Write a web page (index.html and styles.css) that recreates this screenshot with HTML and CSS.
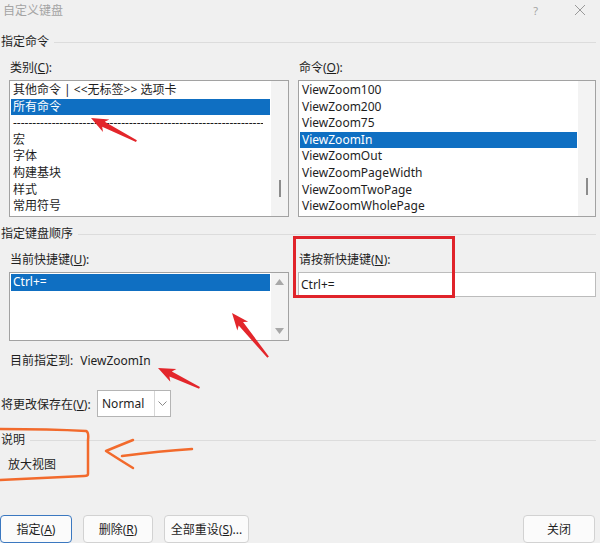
FILE: index.html
```html
<!DOCTYPE html>
<html lang="zh-CN">
<head>
    <meta charset="UTF-8">
    <meta name="viewport" content="width=device-width, initial-scale=1.0">
    <title>自定义键盘</title>
    <link rel="stylesheet" href="styles.css">
</head>
<body>
    <div class="titlebar">
        <span class="title">自定义键盘</span>
        <span class="help">?</span>
        <svg class="close" width="10" height="10" viewBox="0 0 10 10"><path d="M0 0L10 10M10 0L0 10" stroke="#9a9a9a" stroke-width="1"/></svg>
    </div>

    <!-- 指定命令 -->
    <div class="group-head gh-cmd"><span>指定命令</span><i></i></div>
    <div class="cols">
        <div class="col">
            <div class="label">类别(<u>C</u>):</div>
            <div class="listbox tall">
                <ul class="items">
                    <li>其他命令 | &lt;&lt;无标签&gt;&gt; 选项卡</li>
                    <li class="sel">所有命令</li>
                    <li class="dash">-----------------------------------------------------------------</li>
                    <li>宏</li>
                    <li>字体</li>
                    <li>构建基块</li>
                    <li>样式</li>
                    <li>常用符号</li>
                </ul>
                <div class="vscroll"><span class="thumb"></span></div>
            </div>
        </div>
        <div class="col">
            <div class="label">命令(<u>O</u>):</div>
            <div class="listbox tall">
                <ul class="items">
                    <li>ViewZoom100</li>
                    <li>ViewZoom200</li>
                    <li>ViewZoom75</li>
                    <li class="sel">ViewZoomIn</li>
                    <li>ViewZoomOut</li>
                    <li>ViewZoomPageWidth</li>
                    <li>ViewZoomTwoPage</li>
                    <li>ViewZoomWholePage</li>
                </ul>
                <div class="vscroll"><span class="thumb right"></span></div>
            </div>
        </div>
    </div>

    <!-- 指定键盘顺序 -->
    <div class="group-head gh-keys"><span>指定键盘顺序</span><i></i></div>
    <div class="cols">
        <div class="col">
            <div class="label">当前快捷键(<u>U</u>):</div>
            <div class="listbox short">
                <ul class="items">
                    <li class="sel">Ctrl+=</li>
                </ul>
                <div class="vscroll arrows">
                    <svg width="9" height="6" viewBox="0 0 9 6"><path d="M0 6L4.5 0L9 6Z" fill="#a8a8a8"/></svg>
                    <svg width="9" height="6" viewBox="0 0 9 6"><path d="M0 0L4.5 6L9 0Z" fill="#a8a8a8"/></svg>
                </div>
            </div>
        </div>
        <div class="col">
            <div class="label">请按新快捷键(<u>N</u>):</div>
            <div class="textbox">Ctrl+=</div>
        </div>
    </div>

    <div class="assigned"><span>目前指定到:</span><span class="target">ViewZoomIn</span></div>

    <div class="save-row">
        <span class="save-label">将更改保存在(<u>V</u>):</span>
        <div class="dropdown">
            <span class="value">Normal</span>
            <span class="drop-btn"><svg width="9" height="5" viewBox="0 0 9 5"><path d="M0.5 0.5L4.5 4.5L8.5 0.5" fill="none" stroke="#8a8a8a" stroke-width="1"/></svg></span>
        </div>
    </div>

    <!-- 说明 -->
    <div class="group-head gh-desc"><span>说明</span><i></i></div>
    <div class="desc">放大视图</div>

    <div class="buttons">
        <button class="btn default w72">指定(<u>A</u>)</button>
        <button class="btn w70">删除(<u>R</u>)</button>
        <button class="btn w85">全部重设(<u>S</u>)...</button>
        <button class="btn w72 close-btn">关闭</button>
    </div>

    <!-- annotations drawn over the dialog -->
    <svg class="marks" width="600" height="543" viewBox="0 0 600 543">
        <rect x="294.5" y="237.5" width="159" height="59" fill="none" stroke="#e0232a" stroke-width="3"/>
        <g fill="#e3262b">
            <polygon transform="translate(91 118) rotate(27)" points="0,0 17,-7 14,-2.8 51,-1 51,1 14,2.8 17,7"/>
            <polygon transform="translate(232 313) rotate(50.7)" points="0,0 17,-7 14,-2.8 57,-1 57,1 14,2.8 17,7"/>
            <polygon transform="translate(158 368) rotate(25.5)" points="0,0 17,-7 14,-2.8 46,-1 46,1 14,2.8 17,7"/>
        </g>
        <g fill="none" stroke="#f26a2c" stroke-width="2.5" stroke-linecap="round" stroke-linejoin="round">
            <path d="M0 429 Q50 429 86 431 Q89 432 88 440 L88 474 Q88 476 84 476 Q40 478 0 480"/>
            <path d="M192 449 Q160 451 122 456"/>
            <path d="M133 440 Q118 446 106 451 Q120 460 133 468"/>
        </g>
    </svg>
</body>
</html>
```

FILE: styles.css
```css
* {
    box-sizing: border-box;
}
body {
    margin: 0;
    width: 600px;
    height: 543px;
    overflow: hidden;
    position: relative;
    background: #f0f0f0;
    font-family: "Noto Sans", "Noto Sans CJK SC", sans-serif;
    font-size: 12px;
    color: #1e1e1e;
}
u {
    text-decoration: underline;
    text-underline-offset: 1px;
}

.titlebar {
    display: flex;
    align-items: center;
    height: 22px;
    padding: 0 15px 2px 3px;
    color: #a4a4a4;
}
.titlebar .title {
    flex: 1;
}
.help {
    font-size: 11px;
    margin-right: 37px;
}

.group-head {
    display: flex;
    align-items: center;
    height: 18px;
    line-height: 18px;
    padding: 0 4px 0 1px;
}
.group-head i {
    flex: 1;
    border-top: 1px solid #dcdcdc;
    margin-left: 5px;
}
.gh-cmd { margin-top: 11px; }
.gh-keys { margin-top: 8px; }
.gh-desc { margin-top: 14px; }

.cols {
    display: grid;
    grid-template-columns: 280px 298px;
    column-gap: 9px;
    padding-left: 9px;
}
.label {
    height: 18px;
    line-height: 18px;
    margin: 8px 0 3px 1px;
}

.listbox {
    display: flex;
    background: #fff;
    border: 1px solid #a2a2a2;
}
.listbox.tall { height: 137px; }
.listbox.short { height: 69px; }
.items {
    flex: 1;
    list-style: none;
    margin: 0;
    padding: 1px 1px 0 1px;
    overflow: hidden;
}
.items li {
    height: 16.6px;
    line-height: 16.6px;
    padding-left: 2px;
    white-space: nowrap;
}
.items li.sel {
    background: #0f6fc2;
    color: #fff;
}
.items li.dash {
    overflow: hidden;
    width: 252px;
}
.vscroll {
    width: 17px;
    background: #f3f3f3;
    display: flex;
    flex-direction: column;
    align-items: center;
}
.thumb {
    width: 2px;
    height: 17px;
    margin-top: 99px;
    background: #8c8c8c;
}
.thumb.right {
    margin-top: 97px;
}
.vscroll.arrows {
    justify-content: space-between;
    padding: 6px 0;
}

.textbox {
    height: 25px;
    line-height: 23px;
    padding-left: 2px;
    background: #fff;
    border: 1px solid #bcbcbc;
}

.assigned {
    display: flex;
    height: 18px;
    line-height: 18px;
    margin-top: 11px;
    padding-left: 10px;
}
.assigned .target {
    margin-left: 7px;
}

.save-row {
    display: flex;
    align-items: center;
    margin-top: 20px;
    padding-left: 1px;
}
.save-label {
    flex: 0 0 96px;
}
.dropdown {
    display: flex;
    width: 74px;
    height: 27px;
    background: #fff;
    border: 1px solid #b4b4b4;
}
.dropdown .value {
    flex: 1;
    line-height: 25px;
    padding-left: 4px;
}
.drop-btn {
    width: 16px;
    display: flex;
    align-items: center;
    justify-content: center;
    border-left: 1px solid #d6d6d6;
}

.desc {
    height: 18px;
    line-height: 18px;
    margin-top: 7px;
    padding-left: 8px;
}

.buttons {
    display: flex;
    gap: 11px;
    margin-top: 41px;
    padding-right: 5px;
}
.btn {
    height: 28px;
    padding: 0;
    font-family: inherit;
    font-size: 12px;
    color: #1e1e1e;
    background: #fbfbfb;
    border: 1px solid #d2d2d2;
    border-radius: 4px;
}
.btn.default {
    border-color: #3b78c0;
}
.w72 { width: 72px; }
.w70 { width: 70px; }
.w85 { width: 85px; }
.close-btn {
    margin-left: auto;
}

.marks {
    position: absolute;
    top: 0;
    left: 0;
    pointer-events: none;
}
```
